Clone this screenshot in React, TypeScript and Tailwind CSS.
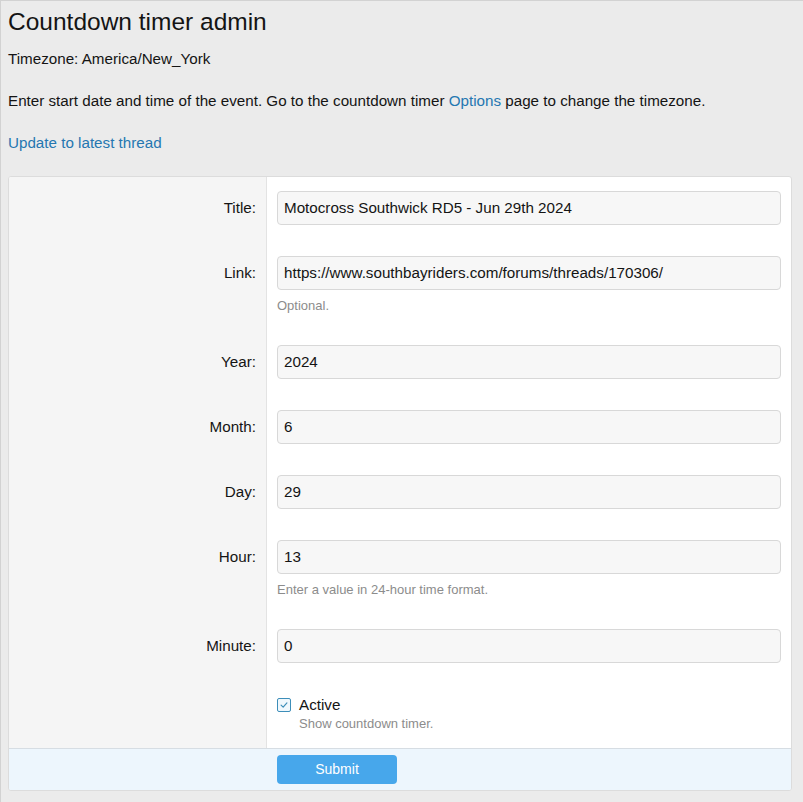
import React from 'react';

const rows = [
  { label: 'Title:', value: 'Motocross Southwick RD5 - Jun 29th 2024' },
  { label: 'Link:', value: 'https://www.southbayriders.com/forums/threads/170306/', hint: 'Optional.' },
  { label: 'Year:', value: '2024' },
  { label: 'Month:', value: '6' },
  { label: 'Day:', value: '29' },
  { label: 'Hour:', value: '13', hint: 'Enter a value in 24-hour time format.' },
  { label: 'Minute:', value: '0' },
];

export default function App() {
  return (
    <div
      className="h-[802px] w-[803px] overflow-hidden border-l border-t border-[#d2d2d2] bg-[#ebebeb] pl-[7px] pr-[11px] text-[#141414]"
      style={{ fontFamily: '"Liberation Sans", Arial, sans-serif' }}
    >
      <h1 className="mt-[6px] text-[24.5px] leading-[30px]">Countdown timer admin</h1>
      <p className="mt-[12px] text-[15.2px] leading-[20px]">Timezone: America/New_York</p>
      <p className="mt-[22px] text-[15.2px] leading-[20px]">
        Enter start date and time of the event. Go to the countdown timer{' '}
        <a href="#" className="text-[#2577b1]">Options</a> page to change the timezone.
      </p>
      <p className="mt-[22px] text-[15.2px] leading-[20px]">
        <a href="#" className="text-[#2577b1]">Update to latest thread</a>
      </p>

      <div className="mt-[23px] overflow-hidden rounded-[3px] border border-[#dcdcdc] bg-white">
        <div className="grid grid-cols-[258px_1fr]">
          {rows.map((row, i) => (
            <React.Fragment key={row.label}>
              <div
                className={`border-r border-[#e3e3e3] bg-[#f5f5f5] pr-[10px] text-right text-[15.2px] leading-[34px] ${i === 0 ? 'pt-[14px]' : 'pt-[31px]'}`}
              >
                {row.label}
              </div>
              <div className={`px-[10px] ${i === 0 ? 'pt-[14px]' : 'pt-[31px]'}`}>
                <div className="h-[34px] rounded-[4px] border border-[#d8d8d8] bg-[#f7f7f7] px-[6px] text-[15.2px] leading-[32px]">
                  {row.value}
                </div>
                {row.hint && (
                  <div className="mt-[7px] text-[13px] leading-[17px] text-[#8c8c8c]">{row.hint}</div>
                )}
              </div>
            </React.Fragment>
          ))}
          <div className="border-r border-[#e3e3e3] bg-[#f5f5f5]" />
          <div className="px-[10px] pb-[15px] pt-[32px]">
            <div className="flex items-center gap-[8px]">
              <span className="flex h-[14px] w-[14px] items-center justify-center rounded-[2px] border border-[#3d8eb9] bg-[#f0f8fd]">
                <svg viewBox="0 0 12 12" className="h-[10px] w-[10px]" fill="none" stroke="#3d8eb9" strokeWidth={1.4}>
                  <path d="M2.5 6.2 L5 8.5 L9.5 3.5" strokeLinecap="round" strokeLinejoin="round" />
                </svg>
              </span>
              <span className="text-[15.2px] leading-[20px]">Active</span>
            </div>
            <div className="pl-[22px] text-[13px] leading-[18px] text-[#8c8c8c]">Show countdown timer.</div>
          </div>
        </div>
        <div className="border-t border-[#d6dde3] bg-[#edf6fd] py-[6px] pl-[268px]">
          <button className="h-[29px] w-[120px] rounded-[4px] bg-[#47a7eb] text-[14px] text-white">Submit</button>
        </div>
      </div>
    </div>
  );
}
